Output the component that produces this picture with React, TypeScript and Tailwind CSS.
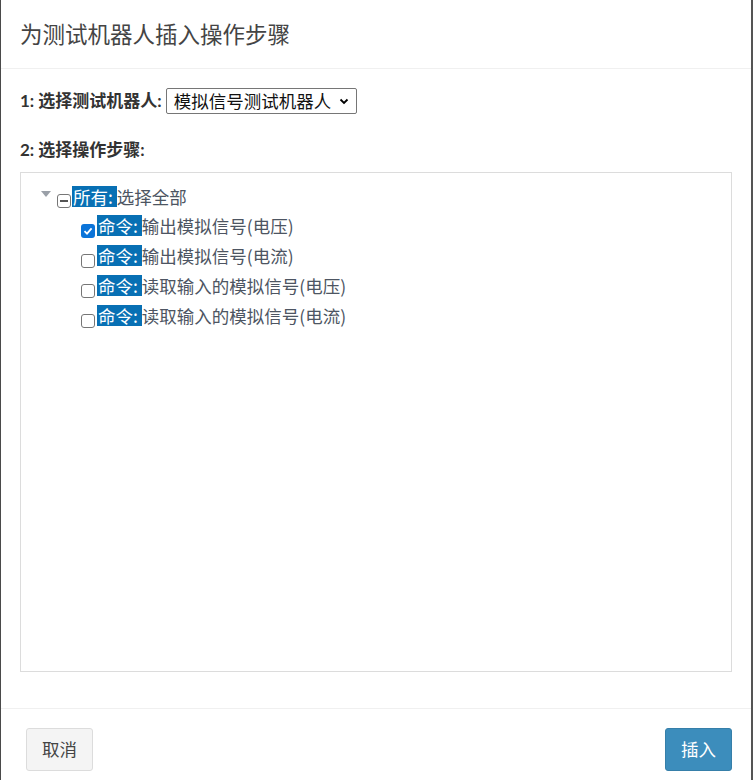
const steps = [
  { text: "输出模拟信号(电压)", checked: true },
  { text: "输出模拟信号(电流)", checked: false },
  { text: "读取输入的模拟信号(电压)", checked: false },
  { text: "读取输入的模拟信号(电流)", checked: false },
];

function Box({ checked }: { checked: boolean }) {
  if (checked) {
    return (
      <span className="w-[14px] h-[14px] mb-[-1px] rounded-[3px] bg-[#0b74d9] flex items-center justify-center shrink-0">
        <svg width="10" height="10" viewBox="0 0 10 10">
          <path d="M1.5 5.2 L4 7.6 L8.6 2.4" stroke="#fff" strokeWidth="1.8" fill="none" />
        </svg>
      </span>
    );
  }
  return <span className="w-[14px] h-[14px] mb-[-1px] rounded-[3px] border border-[#767676] bg-white shrink-0" />;
}

export default function App() {
  return (
    <div className="w-[753px] h-[780px] bg-white border-l border-l-[#4a4a4a] border-r-2 border-r-[#555] flex flex-col text-[#333] font-['Lato','Noto_Sans_CJK_SC',sans-serif] overflow-hidden">
      <div className="h-[69px] border-b border-[#f0f0f0] px-[19px] flex items-center">
        <h1 className="text-[22.5px] text-[#444] font-['Noto_Sans_CJK_SC',sans-serif] pb-[1px]">为测试机器人插入操作步骤</h1>
      </div>
      <div className="px-[19px] pt-[19px] flex-1">
        <div className="flex items-center gap-[4px] h-[26px]">
          <span className="text-[17px] font-bold">1: 选择测试机器人:</span>
          <div className="h-[26px] border border-[#767676] rounded-[2px] flex items-center pl-[7px] pr-[6px] gap-[7px]">
            <span className="text-[17.5px] text-[#111] font-['Noto_Sans_CJK_SC',sans-serif] leading-none">模拟信号测试机器人</span>
            <svg width="12" height="12" viewBox="0 0 12 12">
              <path d="M2.5 4.5 L6 8 L9.5 4.5" stroke="#000" strokeWidth="1.8" fill="none" />
            </svg>
          </div>
        </div>
        <div className="text-[17px] font-bold mt-[25px] h-[22px] flex items-center">2: 选择操作步骤:</div>
        <div className="mt-[11px] h-[500px] w-[712px] border border-[#dcdcdc] pt-[10px] pl-[19px] font-['Noto_Sans_CJK_SC',sans-serif] text-[17.5px] text-[#4d5562]">
          <div className="flex items-end h-[24px]">
            <svg width="12" height="8" viewBox="0 0 12 8" className="mb-[9px] mr-[5px]">
              <path d="M1 1 L11 1 L6 7 Z" fill="#9aa0a8" />
            </svg>
            <span className="w-[14px] h-[14px] rounded-[3px] border border-[#767676] flex items-center justify-center mr-[1px] mb-[-1px]">
              <span className="w-[8px] h-[1.5px] bg-[#555]" />
            </span>
            <span className="bg-[#0870b4] text-white leading-[21px] pl-[1px] whitespace-pre">所有: </span>
            <span className="leading-[21px]">选择全部</span>
          </div>
          <div className="pl-[41px] flex flex-col">
            {steps.map((s) => (
              <div key={s.text} className="flex items-end h-[30px]">
                <Box checked={s.checked} />
                <span className="bg-[#0870b4] text-white leading-[21px] ml-[2px] pl-[1px] mb-[1px] whitespace-pre">命令: </span>
                <span className="leading-[21px] mb-[1px]">{s.text}</span>
              </div>
            ))}
          </div>
        </div>
      </div>
      <div className="border-t border-[#f0f0f0] h-[72px] pl-[25px] pr-[19px] pt-[19px] flex justify-between items-start">
        <button className="h-[43px] w-[67px] rounded-[3px] border border-[#dcdcdc] bg-[#f4f4f4] text-[#444] text-[17.5px] font-['Noto_Sans_CJK_SC',sans-serif]">取消</button>
        <button className="h-[43px] w-[67px] rounded-[3px] border border-[#367fa9] bg-[#3c8dbc] text-white text-[17.5px] font-['Noto_Sans_CJK_SC',sans-serif]">插入</button>
      </div>
    </div>
  );
}
